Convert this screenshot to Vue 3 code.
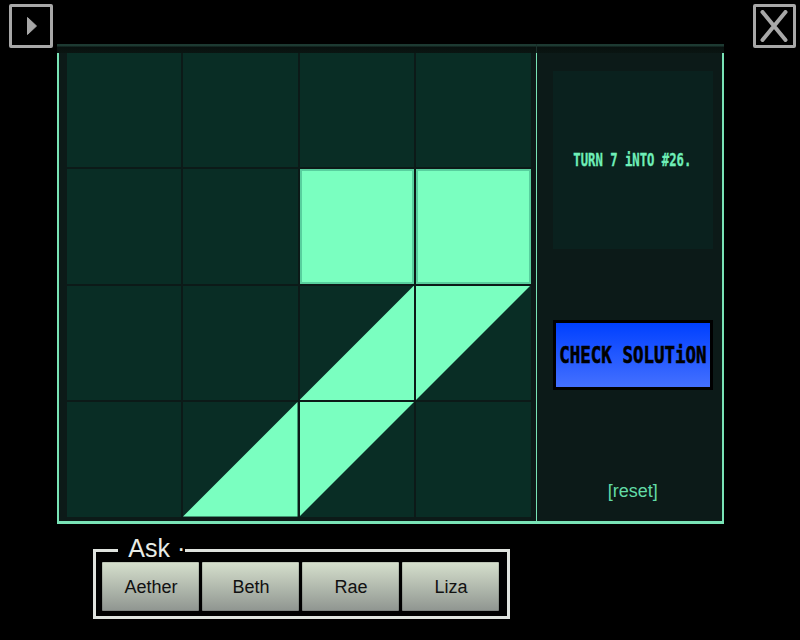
<script setup>
const cells = [
  '', '', '', '',
  '', '', 'full', 'full',
  '', '', 'lower', 'upper',
  '', 'lower', 'upper', ''
]
const names = ['Aether', 'Beth', 'Rae', 'Liza']
</script>

<template>
  <div class="page">
    <header class="top">
      <button class="icon-btn" aria-label="Play">
        <svg width="12" height="20" viewBox="0 0 12 20"><path d="M1.5 1.5 L10.5 10 L1.5 18.5 Z" fill="#a8a8a8" stroke="#a8a8a8" stroke-linejoin="round" /></svg>
      </button>
      <button class="icon-btn" aria-label="Close">
        <svg width="28" height="32" viewBox="0 0 28 32"><path d="M2.5 2 L25.5 30 M25.5 2 L2.5 30" stroke="#a8a8a8" stroke-width="4" stroke-linecap="round" /></svg>
      </button>
    </header>

    <main class="frame">
      <div class="frame-head">
        <span class="head-left"></span>
        <span class="head-right"></span>
      </div>
      <div class="frame-body">
        <section class="board">
          <div v-for="(c, i) in cells" :key="i" class="cell">
            <div v-if="c" :class="['shape', c]"></div>
          </div>
        </section>
        <aside class="side">
          <div class="prompt"><span class="pixel">TURN 7 iNTO #26.</span></div>
          <button class="check"><span class="pixel-big">CHECK SOLUTiON</span></button>
          <a class="reset">[reset]</a>
        </aside>
      </div>
    </main>

    <fieldset class="ask">
      <legend>Ask ·</legend>
      <button v-for="n in names" :key="n" class="name">{{ n }}</button>
    </fieldset>
  </div>
</template>

<style>
html, body { background: #000; margin: 0; }
</style>

<style scoped>
.page {
  width: 800px;
  height: 640px;
  background: #000;
  box-sizing: border-box;
  overflow: hidden;
  font-family: "Liberation Sans", Arial, sans-serif;
}
.top {
  height: 44px;
  padding: 4px 4px 0 9px;
  box-sizing: border-box;
  display: flex;
  justify-content: space-between;
  align-items: flex-start;
  position: relative;
  z-index: 1;
}
.icon-btn {
  flex: none;
  width: 43.5px;
  height: 44px;
  box-sizing: border-box;
  border: 3px solid #a8a8a8;
  border-radius: 2px;
  background: #000;
  padding: 0;
  display: flex;
  align-items: center;
  justify-content: center;
}
.icon-btn:first-child svg { margin-left: 2px; }
.frame {
  margin-left: 57px;
  width: 667px;
  height: 480px;
  position: relative;
  display: flex;
  flex-direction: column;
}
.frame-head {
  height: 8.5px;
  display: flex;
  flex: none;
}
.head-left, .head-right {
  display: block;
  background: linear-gradient(#1d3a32 0, #1d3a32 2px, #08110f 3px, #0a1512 100%);
}
.head-left { width: 479px; }
.head-right { width: 188px; border-left: 1px solid #1a2f2a; box-sizing: border-box; }
.frame-body {
  flex: 1;
  display: flex;
  border: 2px solid #79e3b6;
  border-top: 0;
  border-bottom-width: 3px;
  min-height: 0;
}
.board {
  width: 476.5px;
  box-sizing: border-box;
  flex: none;
  background: #0c1a18;
  padding: 0 4px 0 7.5px;
  display: grid;
  grid-template-columns: repeat(4, 114.5px);
  grid-template-rows: repeat(4, 114.5px);
  gap: 2px;
}
.cell {
  background: #092d25;
  position: relative;
}
.shape { width: 100%; height: 100%; background: #7affc0; }
.shape.full {
  box-sizing: border-box;
  border: 2px solid #58cf9e;
}
.shape.lower { clip-path: polygon(0 100%, 100% 0, 100% 100%); }
.shape.upper { clip-path: polygon(0 0, 100% 0, 0 100%); }
.side {
  flex: 1;
  border-left: 1.5px solid #79e3b6;
  background: #0c1a18;
  display: flex;
  flex-direction: column;
  align-items: flex-start;
  padding: 18.5px 9px 0 16px;
  box-sizing: border-box;
}
.prompt {
  width: 160px;
  height: 178px;
  flex: none;
  background: #0a211e;
  display: flex;
  align-items: center;
  justify-content: center;
}
.pixel {
  color: #6fefb8;
  font-family: "DejaVu Sans Mono", monospace;
  font-weight: 700;
  font-size: 17.5px;
  white-space: nowrap;
  transform: scaleX(0.7);
  -webkit-text-stroke: 0.3px #6fefb8;
}
.check {
  width: 160px;
  height: 70px;
  flex: none;
  margin-top: 71px;
  box-sizing: border-box;
  border: 3px solid #000;
  padding: 0;
  background: linear-gradient(#0040ff, #4470ff);
  display: flex;
  align-items: center;
  justify-content: center;
}
.pixel-big {
  color: #000;
  font-family: "DejaVu Sans Mono", monospace;
  font-weight: 700;
  font-size: 23px;
  white-space: nowrap;
  transform: scaleX(0.76);
  -webkit-text-stroke: 0.6px #000;
}
.reset {
  align-self: center;
  margin-top: 91px;
  color: #62dba6;
  font-size: 18px;
  line-height: 20px;
}
.ask {
  margin: 13px 0 0 93px;
  padding: 0 8px 5px 6.3px;
  width: 417px;
  box-sizing: border-box;
  border: 3px solid #dfe3de;
  display: flex;
  gap: 3.5px;
  min-inline-size: 0;
}
.ask legend {
  color: #e8ece6;
  font-size: 25px;
  line-height: 22px;
  padding: 0 0 4px 10px;
  margin-left: 16px;
  margin-bottom: -1px;
}
.name {
  width: 96.5px;
  height: 49px;
  border: 0;
  padding: 2px 0 0 1px;
  background: linear-gradient(#d6e0cd, #8f9590);
  box-shadow: inset 0 0 0 1px rgba(0, 0, 0, 0.12);
  color: #111;
  font-family: "Liberation Sans", Arial, sans-serif;
  font-size: 18px;
  border-radius: 1px;
}
</style>
